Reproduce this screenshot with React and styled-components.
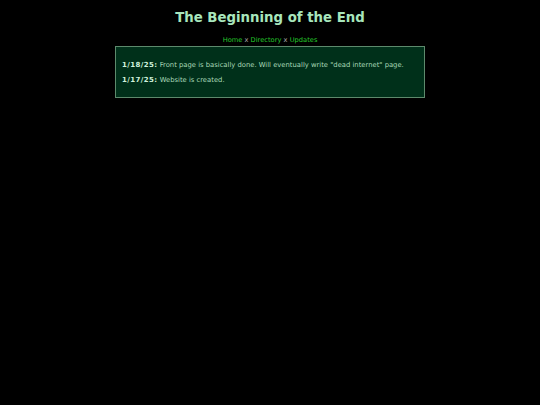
import React from "react";
import styled, { createGlobalStyle } from "styled-components";

const Global = createGlobalStyle`
  html, body { margin: 0; padding: 0; background: #000; }
  body { font-family: "DejaVu Sans", Verdana, sans-serif; color: #9fd9b0; }
`;

const Page = styled.div`
  display: flex;
  flex-direction: column;
  align-items: center;
  padding-top: 9px;
`;

const Title = styled.h1`
  margin: 0;
  font-size: 13.3px;
  font-weight: bold;
  color: #a8e6bc;
  line-height: 18px;
`;

const Nav = styled.nav`
  margin-top: 8px;
  font-size: 6.7px;
  line-height: 10px;
  color: #b0b0b0;
`;

const NavLink = styled.a`
  color: #25c82c;
  text-decoration: none;
`;

const Box = styled.div`
  margin-top: 1px;
  box-sizing: border-box;
  width: 310px;
  background: #00301a;
  border: 1px solid #5d8a6c;
  padding: 14px 6px 12px 6px;
  display: flex;
  flex-direction: column;
  gap: 6px;
`;

const Entry = styled.p`
  margin: 0;
  font-size: 6.8px;
  line-height: 9px;
  color: #a8d8b8;
`;

const DateLabel = styled.b`
  font-weight: bold;
  font-size: 7px;
  letter-spacing: 0.4px;
  color: #d0f2dc;
`;

const updates = [
  { date: "1/18/25:", text: 'Front page is basically done. Will eventually write "dead internet" page.' },
  { date: "1/17/25:", text: "Website is created." },
];

export default function App() {
  return (
    <>
      <Global />
      <Page>
        <Title>The Beginning of the End</Title>
        <Nav>
          <NavLink href="#">Home</NavLink> x <NavLink href="#">Directory</NavLink> x{" "}
          <NavLink href="#">Updates</NavLink>
        </Nav>
        <Box>
          {updates.map((u) => (
            <Entry key={u.date}>
              <DateLabel>{u.date}</DateLabel> {u.text}
            </Entry>
          ))}
        </Box>
      </Page>
    </>
  );
}
